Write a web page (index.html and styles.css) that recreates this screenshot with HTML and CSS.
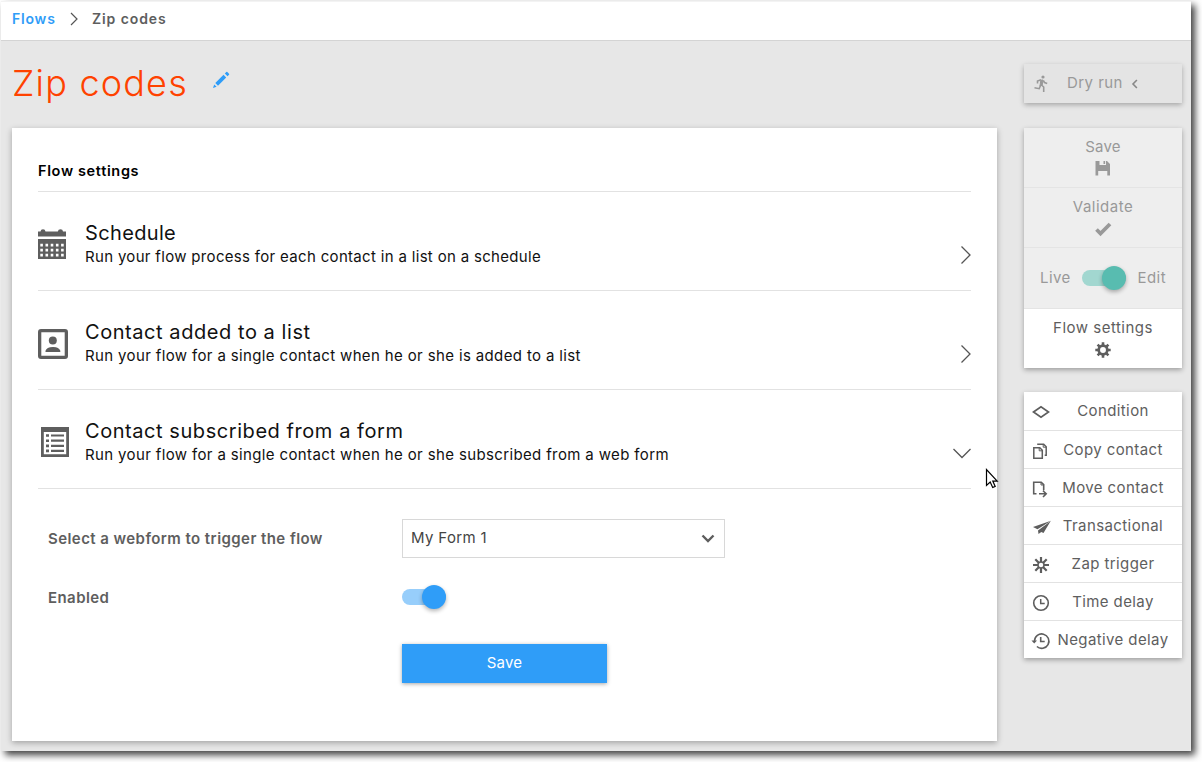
FILE: index.html
```html
<!DOCTYPE html>
<html lang="en">
<head>
<meta charset="utf-8">
<title>Zip codes</title>
<link rel="stylesheet" href="styles.css">
</head>
<body>
<div class="app">
  <nav class="breadcrumb">
    <a class="crumb-link">Flows</a>
    <svg class="crumb-sep" width="8" height="14" viewBox="0 0 8 14"><path d="M1 1l6 6-6 6" fill="none" stroke="#555" stroke-width="1.2"/></svg>
    <span class="crumb-current">Zip codes</span>
  </nav>
  <div class="layout">
    <main class="main">
      <header class="page-head">
        <h1 class="page-title">Zip codes</h1>
        <svg class="pencil" width="18" height="18" viewBox="0 0 18 18" fill="#2f9df8"><path d="M1 17l1.200-3.600 2.400 2.400zM3.300 11.900l8.200-8.100 2.700 2.700-8.200 8.200zM12.800 2.500l1.500-1.500q.5-.5 1 0l1.700 1.700q.5.500 0 1L15.500 5.200z"/></svg>
      </header>
      <section class="card">
        <h2 class="card-title">Flow settings</h2>
        <div class="trigger">
          <span class="trigger-icon schedule-icon"><svg width="30" height="30" viewBox="0 0 30 30" fill="#5e5e5e"><path d="M0 2.500h2.500Q2.800.3 5 .3t2.500 2.200h12.300Q20.200.3 22.500.3t2.500 2.200h3v5H0zM0 10h28v20H0z"/><g fill="#fff"><path id="r" d="M2.300 14.800h2.600v2.600H2.300zM7.500 14.800h2.600v2.600H7.500zM12.700 14.800h2.600v2.600h-2.600zM17.900 14.800h2.600v2.600h-2.600zM23.100 14.800h2.600v2.600h-2.600z"/><use href="#r" y="5"/><use href="#r" y="10"/></g></svg></span>
          <div class="trigger-text">
            <h3 class="trigger-name schedule-name">Schedule</h3>
            <p class="trigger-desc schedule-desc">Run your flow process for each contact in a list on a schedule</p>
          </div>
          <svg class="chevron" width="18" height="20" viewBox="0 0 18 20"><path d="M8.500 1.500L17 10l-8.500 8.500" fill="none" stroke="#555" stroke-width="1.300"/></svg>
        </div>
        <div class="trigger">
          <span class="trigger-icon"><svg width="30" height="30" viewBox="0 0 30 30" fill="#5e5e5e"><path fill-rule="evenodd" d="M3 0h24q3 0 3 3v24q0 3-3 3H3q-3 0-3-3V3q0-3 3-3zM3.300 3.300v23.400h23.400V3.300z"/><circle cx="14.800" cy="11.500" r="4"/><path d="M7.500 23v-1.200Q8.600 18.200 14.800 18t7.500 3.800V23z"/></svg></span>
          <div class="trigger-text">
            <h3 class="trigger-name">Contact added to a list</h3>
            <p class="trigger-desc">Run your flow for a single contact when he or she is added to a list</p>
          </div>
          <svg class="chevron" width="18" height="20" viewBox="0 0 18 20"><path d="M8.500 1.500L17 10l-8.500 8.500" fill="none" stroke="#555" stroke-width="1.300"/></svg>
        </div>
        <div class="trigger">
          <span class="trigger-icon form-icon"><svg width="28" height="30" viewBox="0 0 28 30" fill="#5e5e5e"><path fill-rule="evenodd" d="M0 0h28v30H0zM2.800 5v22.200h22.400V5z"/><path d="M5 7.200h3v2.600H5zM5 12.400h3V15H5zM5 17.600h3v2.600H5zM5 22.600h3v2.600H5zM10 7.400h13v2.200H10zM10 12.600h13v2.200H10zM10 17.800h13V20H10zM10 22.800h13V25H10z"/></svg></span>
          <div class="trigger-text">
            <h3 class="trigger-name">Contact subscribed from a form</h3>
            <p class="trigger-desc">Run your flow for a single contact when he or she subscribed from a web form</p>
          </div>
          <svg class="chevron" width="18" height="20" viewBox="0 0 18 20"><path d="M.5 6L9 14.500 17.500 6" fill="none" stroke="#555" stroke-width="1.300"/></svg>
        </div>
        <form class="form">
          <span class="label">Select a webform to trigger the flow</span>
          <div class="select"><span>My Form 1</span><svg width="14" height="10" viewBox="0 0 14 10"><path d="M1.500 2.500L7 8 12.500 2.500" fill="none" stroke="#5e5e5e" stroke-width="2.400"/></svg></div>
          <span class="label">Enabled</span>
          <span class="switch"><span class="knob"></span></span>
          <button type="button" class="submit">Save</button>
        </form>
      </section>
    </main>
    <aside class="side">
      <div class="dry-run">
        <svg width="16" height="18" viewBox="0 0 16 18"><circle cx="9" cy="2" r="1.600" fill="#999"/><path d="M6.800 5.200L9 5 8.200 10 6 11z" fill="#999" stroke="#999"/><path d="M3.500 8.500V6l3.500-1.300M6.500 10.500l-1.300 3.200-4.700-.9M7.500 10l2.200 2v5M9.300 5.500l1.200 2 2.700.9" fill="none" stroke="#999" stroke-width="1.600"/></svg>
        <span class="dry-label">Dry run</span>
        <svg width="7" height="10" viewBox="0 0 7 10"><path d="M5.900 1L2 5l3.900 4" fill="none" stroke="#888" stroke-width="1.600"/></svg>
      </div>
      <div class="panel actions">
        <div class="action disabled"><span>Save</span><svg width="16" height="16" viewBox="0 0 16 16"><path fill-rule="evenodd" fill="#999" d="M.5 1h11.500l3 3v11.500h-2.700V11H3.200v4.500H.500zM4.500 1v4h6.500V1zM8.500 1h1.600v3H8.500z"/></svg></div>
        <div class="action disabled validate"><span>Validate</span><svg width="16" height="16" viewBox="0 0 16 16"><path d="M1.500 8.500l4 4L15 3" fill="none" stroke="#999" stroke-width="3.800"/></svg></div>
        <div class="action mode disabled"><span>Live</span><span class="switch teal"><span class="knob"></span></span><span>Edit</span></div>
        <div class="action settings"><span>Flow settings</span><svg width="16" height="16" viewBox="0 0 16 16"><circle cx="8" cy="8" r="4.300" fill="none" stroke="#5e5e5e" stroke-width="2.700"/><path d="M8 .3v3M8 12.700v3M.3 8h3M12.700 8h3M2.600 2.600l2 2M11.400 11.400l2 2M13.400 2.600l-2 2M4.600 11.400l-2 2" stroke="#5e5e5e" stroke-width="2.600"/></svg></div>
      </div>
      <ul class="panel nodes">
        <li class="node"><svg width="18" height="18" viewBox="0 0 18 18"><path d="M1.500 9L9 3.700 16.500 9 9 14.300z" fill="none" stroke="#5e5e5e" stroke-width="1.700"/></svg><span>Condition</span></li>
        <li class="node"><svg width="18" height="18" viewBox="0 0 18 18"><path d="M1.800 5.800h6l2.500 2.500v8H1.800zM5.200 2.200h6.500l2.500 2.500v8.500h-1.500" fill="none" stroke="#5e5e5e" stroke-width="1.500"/><path d="M7.200 5.500v3.300h3.300M11.200 2v3.200h3" fill="none" stroke="#5e5e5e"/></svg><span>Copy contact</span></li>
        <li class="node"><svg width="18" height="18" viewBox="0 0 18 18"><path d="M4.500 13.800H1.700V2.200h7.500l2.500 2.500v5.500M7 13.800h7.200M11 10.700l3.200 3.100-3.200 3.200" fill="none" stroke="#5e5e5e" stroke-width="1.600"/><path d="M9 2v3h3" fill="none" stroke="#5e5e5e"/></svg><span>Move contact</span></li>
        <li class="node"><svg width="18" height="18" viewBox="0 0 18 18"><path d="M1 9L19 2.700 5.500 11.300z"/><path d="M18.700 3L11.500 15 9.300 14 6.500 16 6 12.500z"/></svg><span>Transactional</span></li>
        <li class="node"><svg width="18" height="18" viewBox="0 0 18 18"><path d="M9 1v5M9 12v5M1 9h5M12 9h5M3.300 3.300L7 7M11 11l3.700 3.700M14.700 3.300L11 7M7 11l-3.700 3.700" stroke="#5e5e5e" stroke-width="2.200"/><circle cx="9" cy="9" r="3" fill="none" stroke="#5e5e5e" stroke-width="1.500"/></svg><span>Zap trigger</span></li>
        <li class="node"><svg width="18" height="18" viewBox="0 0 18 18"><path d="M8.700 5v4.500h4" fill="none" stroke="#5e5e5e" stroke-width="1.500"/><circle cx="9" cy="9" r="7.300" fill="none" stroke="#5e5e5e" stroke-width="1.600"/></svg><span>Time delay</span></li>
        <li class="node"><svg width="18" height="18" viewBox="0 0 18 18"><path d="M8.700 5v4.500h4M2.500 9.500V9a7.200 7.200 0 1 1 2.400 5.500" fill="none" stroke="#5e5e5e" stroke-width="1.600"/><path d="M-.5 8.500h5.500L2.200 11.500z"/></svg><span>Negative delay</span></li>
      </ul>
    </aside>
  </div>
  <svg class="cursor" width="14" height="22" viewBox="0 0 14 22"><path d="M1.500 1.500v16l3.700-3.400 2.500 5.400 2.500-1.100-2.400-5.300h4.400z" fill="#fff" stroke="#000" stroke-width="1.200"/></svg>
</div>
</body>
</html>
```
FILE: styles.css
```css
* { box-sizing: border-box; }
body {
  margin: 0;
  padding: 1px;
  min-height: 762px;
  background: #fff;
  font-family: Inter, "Open Sans", sans-serif;
  font-size: 15px;
  color: #5e5e5e;
  overflow: hidden;
}
h1, h2, h3, p, ul { margin: 0; padding: 0; }
svg { display: block; flex: none; overflow: visible; }
.app {
  position: relative;
  width: 1190px;
  height: 750px;
  background: #e7e7e7;
  box-shadow: 4px 4px 7px 0 rgba(0, 0, 0, .75);
}
.breadcrumb {
  display: flex;
  align-items: center;
  height: 40px;
  padding: 0 11px 5px;
  background: #fff;
  border-top: 1px solid #f3f3f3;
  border-bottom: 1px solid #d4d4d4;
  font-size: 14px;
  font-weight: 600;
}
.crumb-link { color: #2f9df8; width: 58px; letter-spacing: .8px; }
.crumb-sep { margin-right: 14px; }
.crumb-current { letter-spacing: .9px; }
.layout { display: flex; gap: 27px; padding: 0 9px 0 11px; }
.main { width: 985px; }
.page-head {
  display: flex;
  align-items: center;
  height: 87px;
  gap: 24px;
  padding-bottom: 4px;
}
.page-title {
  color: #ff4200;
  font-size: 36px;
  font-weight: 300;
  letter-spacing: 1.2px;
  line-height: 44px;
}
.pencil { margin-top: -5px; }
.card {
  height: 613px;
  padding: 26px;
  background: #fff;
  box-shadow: 0 2px 6px rgba(0, 0, 0, .3);
}
.card-title {
  height: 38px;
  line-height: 34px;
  border-bottom: 1px solid #e2e2e2;
  color: #000;
  font-size: 14.5px;
  font-weight: 600;
  letter-spacing: .65px;
}
.trigger {
  display: flex;
  height: 99px;
  padding-top: 29px;
  border-bottom: 1px solid #e2e2e2;
  color: #111;
}
.trigger-icon { width: 47px; padding-top: 9px; }
.schedule-icon { padding-top: 8px; }
.form-icon { padding: 8px 0 0 3px; }
.trigger-text { flex: 1; }
.trigger-name {
  font-size: 20px;
  font-weight: 400;
  line-height: 24px;
  letter-spacing: .56px;
}
.schedule-name { letter-spacing: .35px; }
.trigger-desc { line-height: 24px; white-space: nowrap; letter-spacing: .365px; }
.schedule-desc { letter-spacing: .32px; }
.chevron { margin-top: 24px; }
.form {
  display: grid;
  grid-template-columns: 354px 1fr;
  grid-template-rows: 39px 38px 39px;
  row-gap: 20px;
  align-items: center;
  padding: 30px 0 0 10px;
}
.label { font-weight: 600; letter-spacing: .43px; }
.select {
  display: flex;
  align-items: center;
  justify-content: space-between;
  width: 323px;
  height: 39px;
  padding: 0 9px 2px 8px;
  border: 1px solid #d8d8d8;
  color: #444;
  letter-spacing: .35px;
}
.switch {
  display: flex;
  justify-content: flex-end;
  align-items: center;
  width: 44px;
  height: 16px;
  border-radius: 8px;
  background: #97cefb;
}
.knob {
  width: 24px;
  height: 24px;
  flex: none;
  border-radius: 50%;
  background: #2f9df8;
  box-shadow: 0 2px 4px rgba(0, 0, 0, .3);
}
.teal { background: #a2d7d0; }
.teal .knob { background: #58bcb0; }
.submit {
  grid-column: 2;
  margin-top: 16px;
  width: 205px;
  height: 39px;
  padding: 0 0 2px;
  border: 0;
  background: #2f9df8;
  color: #fff;
  font: inherit;
  letter-spacing: .2px;
  box-shadow: 0 1px 4px rgba(0, 0, 0, .35);
}
.side { width: 158px; padding-top: 23px; }
.dry-run {
  display: flex;
  align-items: center;
  height: 39px;
  padding: 0 10px;
  margin-bottom: 25px;
  color: #999;
  background: #e4e4e4;
  box-shadow: 0 2px 5px rgba(0, 0, 0, .28);
}
.dry-run svg { margin-top: 1px; }
.dry-label {
  width: 57px;
  margin: 0 7px 1px 17px;
  padding-bottom: 1px;
  white-space: nowrap;
  letter-spacing: .45px;
}
.panel {
  background: #fff;
  box-shadow: 0 2px 5px rgba(0, 0, 0, .32);
}
.actions { height: 240px; margin-bottom: 24px; }
.action {
  display: flex;
  flex-direction: column;
  align-items: center;
  height: 60px;
  padding-top: 9px;
  gap: 3px;
  line-height: 20px;
  letter-spacing: .2px;
}
.validate, .settings { gap: 4px; letter-spacing: .5px; }
.disabled { background: #eee; border-bottom: 1px solid #e4e4e4; color: #999; }
.mode {
  flex-direction: row;
  height: 61px;
  padding: 0 16px;
  justify-content: space-between;
  padding-bottom: 0;
  letter-spacing: .45px;
}
.action.mode { padding: 0 16px; }
.nodes { list-style: none; }
.node {
  display: flex;
  align-items: center;
  height: 38px;
  padding-left: 8px;
  border-bottom: 1px solid #e2e2e2;
}
.node:first-child { height: 39px; padding-bottom: 1px; }
.node:last-child { height: 37px; border-bottom: 0; }
.node svg { width: 18px; margin-top: 3px; fill: #5e5e5e; }
.node span {
  flex: 1;
  margin-right: 8px;
  padding-left: 2px;
  text-align: center;
  white-space: nowrap;
  letter-spacing: .4px;
}
.cursor { position: absolute; left: 984px; top: 467px; }
```
